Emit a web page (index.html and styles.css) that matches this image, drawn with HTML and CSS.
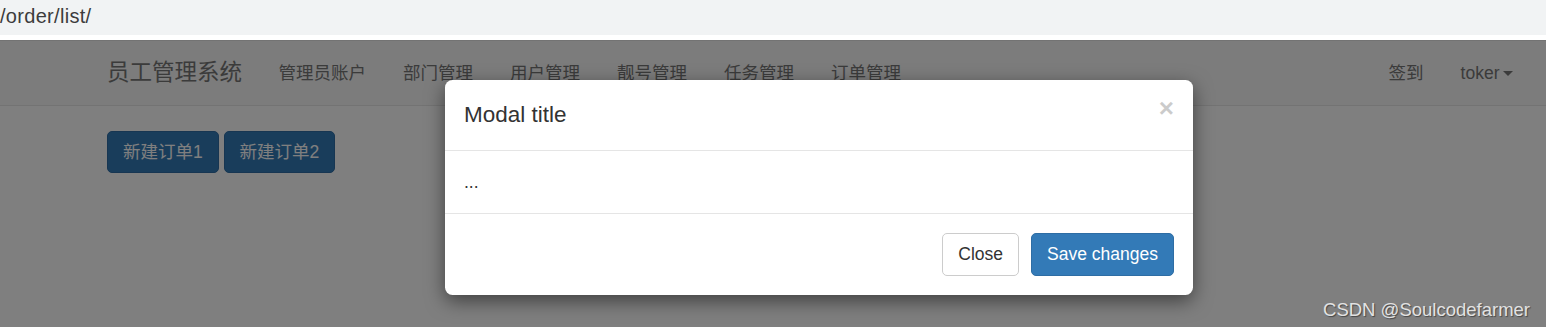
FILE: index.html
```html
<!DOCTYPE html>
<html lang="en">
<head>
  <meta charset="UTF-8">
  <meta name="viewport" content="width=device-width, initial-scale=1.0">
  <title>订单列表</title>
  <link rel="stylesheet" href="styles.css">
</head>
<body>
  <div class="address-bar">
    <span class="url">/order/list/</span>
  </div>

  <div class="viewport">
    <nav class="navbar">
      <div class="nav-left">
        <a class="brand" href="#">员工管理系统</a>
        <ul class="nav">
          <li><a href="#">管理员账户</a></li>
          <li><a href="#">部门管理</a></li>
          <li><a href="#">用户管理</a></li>
          <li><a href="#">靓号管理</a></li>
          <li><a href="#">任务管理</a></li>
          <li><a href="#">订单管理</a></li>
        </ul>
      </div>
      <ul class="nav nav-right">
        <li><a href="#">签到</a></li>
        <li><a href="#" class="dropdown">toker<span class="caret"></span></a></li>
      </ul>
    </nav>

    <div class="container">
      <button class="btn btn-primary">新建订单1</button>
      <button class="btn btn-primary">新建订单2</button>
    </div>

    <!-- modal backdrop + dialog -->
    <div class="backdrop"></div>
    <div class="modal">
      <div class="modal-header">
        <h4 class="modal-title">Modal title</h4>
        <button class="close">&times;</button>
      </div>
      <div class="modal-body">...</div>
      <div class="modal-footer">
        <button class="btn btn-default">Close</button>
        <button class="btn btn-primary">Save changes</button>
      </div>
    </div>

    <div class="watermark">CSDN @Soulcodefarmer</div>
  </div>
</body>
</html>
```

FILE: styles.css
```css
/* General Styles */
* {
  box-sizing: border-box;
}

body {
  margin: 0;
  background: #fff;
  font-family: 'Liberation Sans', 'Noto Sans CJK SC', sans-serif;
  font-size: 17.5px;
  color: #333;
  overflow: hidden;
}

a {
  text-decoration: none;
}

ul {
  list-style: none;
  margin: 0;
  padding: 0;
}

/* Browser address bar strip */
.address-bar {
  height: 35px;
  background: #f1f3f4;
  display: flex;
  align-items: center;
  padding-bottom: 2px;
}

.url {
  font-size: 20px;
  color: #3c3c3c;
  letter-spacing: 0.3px;
}

.viewport {
  position: relative;
  margin-top: 5px;
  height: 287px;
}

/* Navbar */
.navbar {
  display: flex;
  justify-content: space-between;
  align-items: center;
  height: 66px;
  background: #f8f8f8;
  border-top: 1px solid #e7e7e7;
  border-bottom: 1px solid #e7e7e7;
  padding: 0 15px 0 88px;
}

.nav-left {
  display: flex;
  align-items: center;
}

.brand {
  color: #777;
  font-size: 22.5px;
  padding: 0 18px 0 19px;
  line-height: 30px;
}

.nav {
  display: flex;
}

.nav a {
  display: block;
  color: #777;
  padding: 0 18.5px;
  line-height: 25px;
}

.caret {
  display: inline-block;
  width: 0;
  height: 0;
  margin-left: 3px;
  vertical-align: middle;
  border-top: 5px solid #777;
  border-left: 5px solid transparent;
  border-right: 5px solid transparent;
}

/* Page content */
.container {
  padding: 25px 0 0 107px;
}

.btn {
  display: inline-block;
  font-family: inherit;
  font-size: 17.5px;
  line-height: 25px;
  padding: 7.5px 15px;
  border: 1px solid transparent;
  border-radius: 5px;
  cursor: pointer;
}

.btn-primary {
  color: #fff;
  background-color: #337ab7;
  border-color: #2e6da4;
}

.btn-default {
  color: #333;
  background-color: #fff;
  border-color: #ccc;
}

.container .btn + .btn {
  margin-left: 0;
}

/* Modal */
.backdrop {
  position: absolute;
  inset: 0;
  background: rgba(0, 0, 0, 0.5);
}

.modal {
  position: absolute;
  top: 40px;
  left: 445px;
  width: 748px;
  background: #fff;
  border-radius: 7.5px;
  box-shadow: 0 6px 19px rgba(0, 0, 0, 0.5);
}

.modal-header {
  display: flex;
  justify-content: space-between;
  align-items: flex-start;
  padding: 19px;
  border-bottom: 1px solid #e5e5e5;
}

.modal-title {
  margin: 0;
  font-size: 22.5px;
  font-weight: normal;
  line-height: 32px;
  color: #333;
}

.close {
  background: none;
  border: 0;
  padding: 0;
  margin-top: -7px;
  font-family: inherit;
  font-size: 26px;
  font-weight: bold;
  line-height: 32px;
  color: #000;
  opacity: 0.2;
  cursor: pointer;
}

.modal-body {
  padding: 19px;
  line-height: 24px;
}

.modal-footer {
  display: flex;
  justify-content: flex-end;
  gap: 12px;
  padding: 19px;
  border-top: 1px solid #e5e5e5;
  border-radius: 0 0 7.5px 7.5px;
  height: 82px;
}

/* Screenshot watermark */
.watermark {
  position: absolute;
  right: 16px;
  bottom: 6px;
  font-size: 18.5px;
  color: #e2e2e2;
  text-shadow: 1px 1px 1px rgba(0, 0, 0, 0.45);
}
```
